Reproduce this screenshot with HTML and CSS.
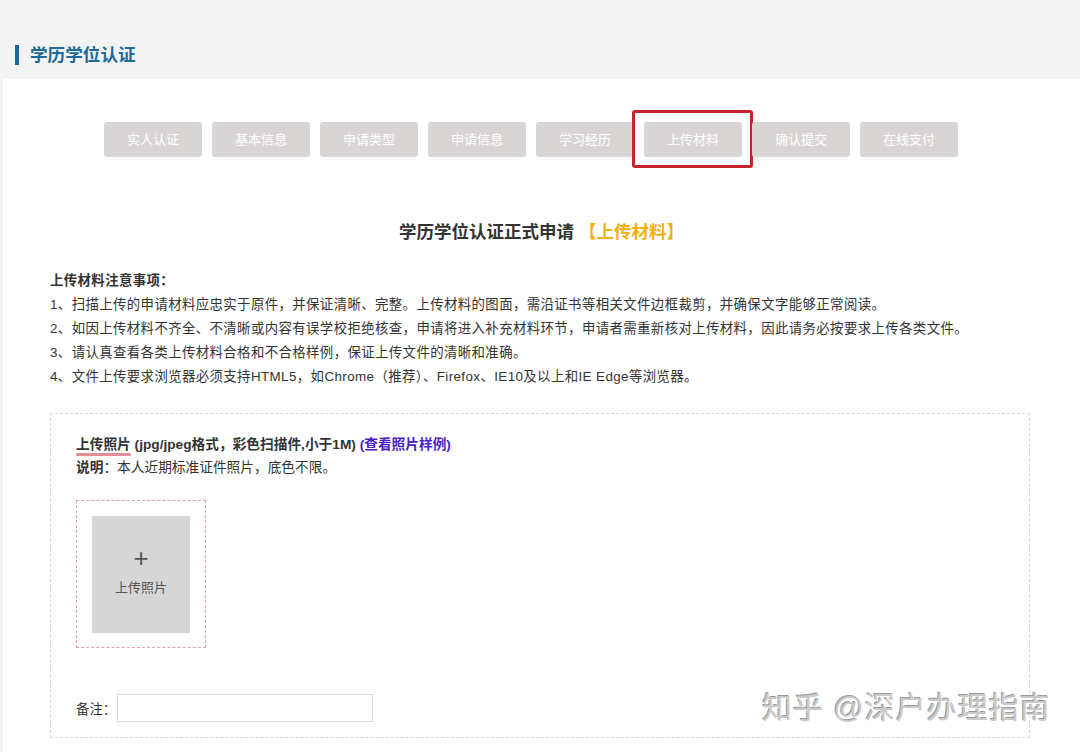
FILE: index.html
```html
<!DOCTYPE html>
<html lang="zh-CN">
<head>
    <meta charset="UTF-8">
    <title>学历学位认证</title>
    <link rel="stylesheet" href="styles.css">
</head>
<body>

<div class="page-head">
    <span class="accent"></span>
    <h1>学历学位认证</h1>
</div>

<div class="panel">
    <div class="steps">
        <div class="step">实人认证</div>
        <div class="step">基本信息</div>
        <div class="step">申请类型</div>
        <div class="step">申请信息</div>
        <div class="step">学习经历</div>
        <div class="step current">上传材料</div>
        <div class="step">确认提交</div>
        <div class="step">在线支付</div>
    </div>

    <h2 class="form-title">学历学位认证正式申请 <span class="stage">【上传材料】</span></h2>

    <div class="notes">
        <p class="notes-head">上传材料注意事项：</p>
        <p>1、扫描上传的申请材料应忠实于原件，并保证清晰、完整。上传材料的图面，需沿证书等相关文件边框裁剪，并确保文字能够正常阅读。</p>
        <p>2、如因上传材料不齐全、不清晰或内容有误学校拒绝核查，申请将进入补充材料环节，申请者需重新核对上传材料，因此请务必按要求上传各类文件。</p>
        <p>3、请认真查看各类上传材料合格和不合格样例，保证上传文件的清晰和准确。</p>
        <p>4、文件上传要求浏览器必须支持HTML5，如Chrome（推荐）、Firefox、IE10及以上和IE Edge等浏览器。</p>
    </div>

    <div class="upload-section">
        <p class="upload-title"><span class="marked">上传照片</span> (jpg/jpeg格式，彩色扫描件,小于1M) <a href="#" class="sample">(查看照片样例)</a></p>
        <p class="upload-desc"><b>说明</b>：本人近期标准证件照片，底色不限。</p>

        <div class="photo-box">
            <div class="photo-slot">
                <span class="plus">+</span>
                <span>上传照片</span>
            </div>
        </div>

        <div class="remark">
            <label for="remark">备注：</label>
            <input type="text" id="remark">
        </div>
    </div>
</div>

<div class="watermark">知乎 @深户办理指南</div>

</body>
</html>
```

FILE: styles.css
```css
body {
    margin: 0;
    font-family: "Liberation Sans", "Noto Sans CJK SC", sans-serif;
    background-color: #f3f3f3;
    color: #333;
    position: relative;
    height: 752px;
    overflow: hidden;
}

p {
    margin: 0;
}

.page-head {
    height: 79px;
    box-sizing: border-box;
    padding: 45px 0 0 15px;
    display: flex;
    align-items: flex-start;
}

.page-head .accent {
    width: 4px;
    height: 20px;
    background-color: #1a6a9e;
    margin-right: 11px;
}

.page-head h1 {
    margin: 0;
    font-size: 17.6px;
    line-height: 20px;
    color: #1e6a9c;
    font-weight: bold;
}

.panel {
    background: white;
    margin-left: 3px;
    height: 673px;
}

.steps {
    display: flex;
    gap: 10px;
    padding: 43px 0 0 101px;
}

.step {
    width: 98px;
    height: 35px;
    line-height: 35px;
    text-align: center;
    background-color: #d8d5d4;
    color: white;
    font-size: 13px;
    border-radius: 3px;
    position: relative;
}

.step.current::after {
    content: "";
    position: absolute;
    top: -12px;
    left: -12px;
    right: -11px;
    bottom: -11px;
    border: 3px solid #c4232c;
    border-radius: 3px;
}

.form-title {
    margin: 63px 0 0;
    text-align: center;
    font-size: 17.5px;
    line-height: 24px;
    font-weight: bold;
    color: #333;
}

.form-title .stage {
    color: #f0b010;
}

.notes {
    margin: 25px 0 0 47px;
    font-size: 13.4px;
    line-height: 24px;
    letter-spacing: 0.4px;
    color: #333;
}

.notes-head {
    font-weight: bold;
}

.upload-section {
    margin: 24px 0 0 47px;
    width: 980px;
    box-sizing: border-box;
    border: 1px dashed #d8d8d8;
    padding: 20px 0 15px 25px;
    font-size: 13.7px;
}

.upload-title {
    font-weight: bold;
    line-height: 22px;
}

.marked {
    position: relative;
}

.marked::after {
    content: "";
    position: absolute;
    left: 0;
    right: 0;
    bottom: -4px;
    height: 3px;
    border-radius: 2px;
    background-color: #e58d95;
}

.sample {
    color: #4a1dc8;
    text-decoration: none;
}

.upload-desc {
    line-height: 22px;
    margin-top: 1px;
}

.photo-box {
    margin-top: 21px;
    width: 130px;
    height: 148px;
    box-sizing: border-box;
    border: 1px dashed #e2a2a4;
    padding: 15px;
}

.photo-slot {
    width: 98px;
    height: 117px;
    background-color: #d6d6d6;
    display: flex;
    flex-direction: column;
    align-items: center;
    color: #555;
    font-size: 13px;
}

.photo-slot .plus {
    font-size: 26px;
    line-height: 26px;
    margin: 29px 0 6px;
    font-weight: 300;
}

.remark {
    margin-top: 46px;
    display: flex;
    align-items: center;
    font-size: 13.4px;
}

.remark input {
    width: 256px;
    height: 28px;
    box-sizing: border-box;
    border: 1px solid #dcdcdc;
    margin-left: 1px;
}

.watermark {
    position: absolute;
    left: 762px;
    top: 689px;
    font-size: 30px;
    line-height: 38px;
    color: #cacaca;
    text-shadow: 1px 1px 0 #fff, -1px -1px 0 #9a9a9a;
    letter-spacing: 1px;
}
```
